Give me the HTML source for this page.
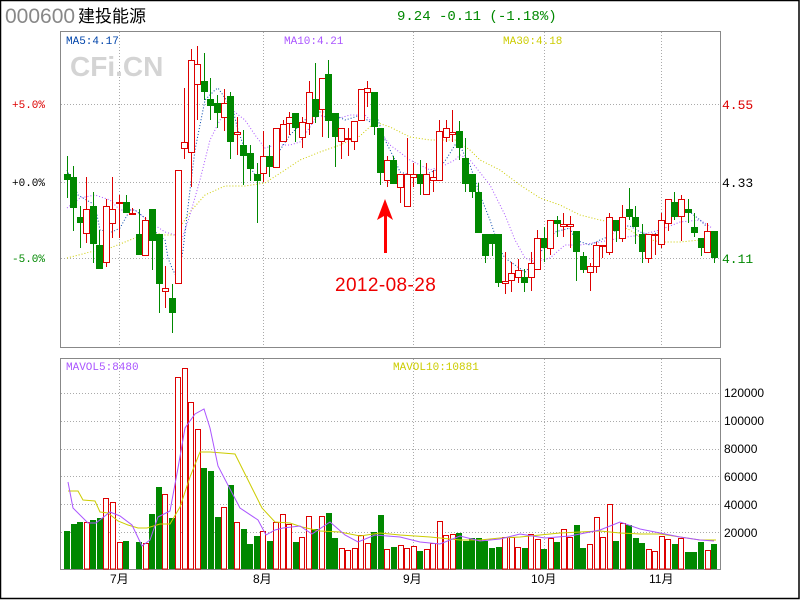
<!DOCTYPE html>
<html><head><meta charset="utf-8"><style>
html,body{margin:0;padding:0;background:#fff}
#w{position:relative;width:800px;height:600px;overflow:hidden;background:#fff}
svg{position:absolute;left:0;top:0}
.t{font-family:"Liberation Mono","DejaVu Sans Mono",monospace}
#c rect,#c line{shape-rendering:crispEdges}
</style></head><body><div id="w">
<svg id="s" width="800" height="600" xmlns="http://www.w3.org/2000/svg">
<rect x="0.5" y="0.5" width="798.5" height="598" fill="none" stroke="#000" stroke-width="1.5"/>
<text x="5" y="23" font-family="Liberation Sans,sans-serif" font-size="21" fill="#888">000600</text>
<text x="78" y="22" font-family="Liberation Sans,'Noto Sans CJK SC',sans-serif" font-size="17" fill="#000">建投能源</text>
<text x="397" y="20" class="t" font-size="14" fill="#080">9.24 -0.11 (-1.18%)</text>
<g stroke="#aaa" stroke-dasharray="1,2" stroke-width="1">
<line x1="61" y1="104.5" x2="720" y2="104.5"/><line x1="61" y1="182.5" x2="720" y2="182.5"/><line x1="61" y1="258.5" x2="720" y2="258.5"/>
<line x1="61" y1="393.5" x2="720" y2="393.5"/><line x1="61" y1="421.5" x2="720" y2="421.5"/><line x1="61" y1="449.5" x2="720" y2="449.5"/><line x1="61" y1="476.5" x2="720" y2="476.5"/><line x1="61" y1="504.5" x2="720" y2="504.5"/><line x1="61" y1="532.5" x2="720" y2="532.5"/>
<line x1="119.5" y1="32" x2="119.5" y2="347"/><line x1="263.5" y1="32" x2="263.5" y2="347"/><line x1="413.5" y1="32" x2="413.5" y2="347"/><line x1="544.5" y1="32" x2="544.5" y2="347"/><line x1="661.5" y1="32" x2="661.5" y2="347"/>
<line x1="119.5" y1="359" x2="119.5" y2="569"/><line x1="263.5" y1="359" x2="263.5" y2="569"/><line x1="413.5" y1="359" x2="413.5" y2="569"/><line x1="544.5" y1="359" x2="544.5" y2="569"/><line x1="661.5" y1="359" x2="661.5" y2="569"/>
</g>
<rect x="60.5" y="31.5" width="660" height="316" fill="none" stroke="#888"/>
<rect x="60.5" y="358.5" width="660" height="211" fill="none" stroke="#888"/>
<text x="70" y="76" font-family="Liberation Sans,sans-serif" font-weight="bold" font-size="28" fill="#d4d4d4">CFi.CN</text>
<g class="t" font-size="11">
<text x="66" y="44" fill="#04a">MA5:4.17</text>
<text x="284" y="44" fill="#a5f">MA10:4.21</text>
<text x="503" y="44" fill="#cc0">MA30:4.18</text>
<text x="12" y="108" fill="#d00">+5.0%</text>
<text x="12" y="186" fill="#000">+0.0%</text>
<text x="12" y="262" fill="#080">-5.0%</text>
<text x="722" y="109" fill="#d00" font-size="13">4.55</text>
<text x="722" y="187" fill="#000" font-size="13">4.33</text>
<text x="722" y="263" fill="#080" font-size="13">4.11</text>
<text x="66" y="370" fill="#a5f">MAVOL5:8480</text>
<text x="393" y="370" fill="#cc0">MAVOL10:10881</text>
</g>
<g font-family="Liberation Sans,sans-serif" font-size="12" fill="#000">
<text x="724" y="397">120000</text><text x="724" y="425">100000</text><text x="724" y="453">80000</text><text x="724" y="481">60000</text><text x="724" y="509">40000</text><text x="724" y="537">20000</text>
</g>
<g font-family="Liberation Sans,'Noto Sans CJK SC',sans-serif" font-size="12" fill="#000">
<text x="110" y="583">7月</text><text x="253" y="583">8月</text><text x="403" y="583">9月</text><text x="531" y="583">10月</text><text x="649" y="583">11月</text>
</g>
<g id="c"></g>
<polygon points="385,199 377,220 384,216 384,253 387,253 387,216 393,220" fill="#f00"/>
<text x="335" y="291" font-family="Liberation Sans,sans-serif" font-size="19" letter-spacing="0.4" fill="#e00">2012-08-28</text>
</svg>
</div>
<script>
var C=[[67,'g',174,180,156,198],[73,'g',177,208,166,231],[80,'g',217,223,206,248],[86,'r',209,233,177,243],[93,'g',206,244,192,263],[99,'g',245,269,230,269],[106,'r',206,262,199,267],[112,'r',209,223,177,238],[119,'r',202,203,195,238],[126,'g',202,213,195,213],[132,'r',213,214,208,214],[139,'g',234,255,209,255],[145,'r',220,255,217,255],[152,'g',209,241,209,270],[159,'g',234,284,234,313],[165,'r',288,291,266,308],[172,'g',298,313,284,333],[178,'r',170,283,170,283],[184,'r',142,148,88,159],[191,'r',60,152,49,187],[197,'r',64,84,46,120],[204,'g',81,92,53,100],[210,'g',99,106,78,120],[217,'g',103,113,95,128],[224,'r',103,117,89,131],[230,'g',96,142,92,159],[237,'r',132,134,117,155],[243,'g',145,156,130,185],[250,'g',153,169,145,181],[257,'g',174,181,163,223],[263,'r',156,173,131,182],[269,'g',156,167,145,177],[276,'r',128,167,128,167],[283,'r',124,141,120,141],[289,'r',117,123,112,135],[295,'g',113,128,113,142],[302,'r',122,137,117,148],[309,'r',92,123,81,135],[315,'g',99,117,63,123],[322,'r',78,109,78,137],[328,'g',74,121,60,138],[335,'g',113,137,113,167],[341,'r',128,141,128,159],[348,'r',138,139,128,156],[354,'r',121,141,121,150],[361,'r',89,120,89,120],[367,'r',88,92,81,107],[374,'g',92,127,92,135],[380,'g',128,173,128,185],[387,'r',160,180,156,187],[393,'g',160,184,156,184],[400,'r',174,187,174,203],[407,'r',174,206,138,206],[413,'r',174,177,163,187],[420,'g',174,184,160,195],[426,'r',174,194,163,194],[433,'r',177,180,170,192],[439,'r',131,180,120,180],[446,'r',128,137,120,142],[452,'r',132,134,110,142],[459,'g',131,148,121,160],[465,'g',158,184,138,192],[472,'g',174,192,174,198],[478,'g',192,233,183,233],[485,'g',234,256,234,263],[492,'g',234,244,234,256],[498,'g',234,283,234,287],[505,'r',281,283,252,294],[511,'r',273,280,262,292],[518,'r',270,277,259,283],[524,'g',277,283,269,292],[531,'r',263,277,252,291],[537,'r',238,269,230,269],[544,'g',238,248,227,262],[550,'r',220,248,220,255],[557,'g',220,224,216,237],[563,'r',224,226,213,237],[570,'r',224,226,216,248],[576,'g',231,252,231,281],[583,'g',256,270,252,273],[590,'r',266,272,263,291],[596,'r',245,266,242,273],[602,'r',245,246,245,258],[609,'r',217,252,213,255],[616,'g',220,231,220,242],[622,'r',217,238,205,242],[629,'g',209,217,188,220],[635,'g',217,227,206,244],[642,'g',234,252,224,263],[648,'r',234,258,234,263],[655,'r',234,235,234,255],[661,'r',220,244,213,248],[668,'r',199,223,199,231],[674,'g',202,217,192,220],[681,'r',199,216,195,241],[688,'g',209,213,199,223],[694,'g',227,233,213,237],[701,'g',238,248,238,256],[707,'r',231,252,223,252],[714,'g',231,258,231,263]];
var V=[[64,'g',531],[71,'g',524],[77,'g',522],[84,'r',522],[90,'g',520],[97,'g',518],[103,'r',498],[110,'r',502],[117,'r',542],[123,'g',541],[136,'g',542],[143,'r',543],[149,'g',514],[156,'g',487],[162,'r',494],[169,'g',518],[175,'r',377],[182,'r',368],[188,'r',402],[195,'r',429],[201,'g',468],[208,'g',471],[215,'g',517],[221,'r',507],[228,'g',485],[234,'r',522],[241,'g',529],[247,'g',544],[254,'g',536],[260,'r',531],[267,'g',541],[273,'r',522],[280,'r',514],[286,'r',524],[293,'g',542],[299,'r',537],[306,'r',516],[312,'g',529],[319,'r',516],[326,'g',513],[332,'g',538],[339,'r',548],[345,'r',550],[352,'r',548],[358,'r',535],[365,'r',543],[371,'g',532],[378,'g',515],[384,'r',549]];
var V2=[[3,'g',547],[24,'r',545],[43,'r',548],[63,'r',546],[81,'g',551],[102,'r',549],[121,'r',543],[142,'r',521],[160,'r',535],[180,'r',534],[199,'g',533],[219,'g',541],[238,'g',538],[258,'g',538],[277,'g',541],[297,'g',548],[317,'g',547],[337,'r',537],[356,'r',537],[376,'r',547],[395,'g',548],[415,'r',534],[435,'r',539],[453,'g',549],[474,'r',538],[492,'g',542],[513,'r',529],[532,'r',537],[551,'g',525],[570,'g',548],[590,'r',544],[612,'r',517],[631,'r',537],[651,'r',504],[668,'g',541],[690,'r',523],[708,'g',525],[728,'g',538],[747,'g',543],[767,'r',549],[786,'r',551],[806,'r',536],[825,'r',539],[845,'g',544],[864,'r',538],[884,'g',552],[904,'g',552],[923,'g',542],[945,'r',550],[963,'g',544]];
V2.forEach(function(b){V.push([390+b[0]/3,b[1],b[2]])});
var s='';
function ln(p,c,d){return '<polyline fill="none" stroke="'+c+'" stroke-width="1"'+(d?' stroke-dasharray="1,2"':'')+' points="'+p+'"/>';}
s+=ln('67,258 90,252 110,248 130,240 150,232 165,235 175,235 190,212 205,195 225,186 245,186 265,183 285,170 300,160 320,152 340,145 360,136 375,122 390,127 410,137 430,140 455,140 470,150 480,160 500,170 520,185 540,198 560,205 580,215 600,220 610,222 630,230 640,237 660,242 680,242 700,240 710,236','#cc0',1);
s+=ln('67,208 80,198 95,195 110,200 120,210 135,210 150,222 165,232 175,235 180,245 190,215 200,180 210,140 220,120 232,110 245,120 255,135 265,148 275,145 290,145 300,142 318,115 330,118 340,118 350,115 365,115 375,125 390,145 410,160 430,170 445,165 455,160 460,155 470,160 490,185 505,215 515,240 525,258 535,262 550,258 565,245 580,245 600,242 620,238 640,235 660,230 680,222 700,220 712,228','#a5f',1);
s+=ln('67,170 78,195 95,205 100,230 112,232 120,228 130,210 135,210 145,218 158,235 165,240 168,258 172,268 178,280 183,250 190,190 195,150 205,100 215,90 218,88 225,98 233,110 238,130 245,150 252,170 258,180 262,172 270,162 280,150 290,135 300,125 313,112 325,112 335,115 345,120 352,118 360,115 370,122 378,120 385,140 395,160 400,172 410,175 425,175 440,168 447,158 455,145 462,150 470,165 480,195 490,220 500,250 505,258 515,265 525,272 535,262 545,245 555,232 570,228 575,240 590,245 600,240 610,236 620,226 630,226 640,232 650,235 660,232 670,215 680,210 690,212 700,220 706,226','#04a',1);
C.forEach(function(k){var x=k[0],col=k[1]=='r'?'#d00':'#080',h=Math.max(1,k[3]-k[2]);
s+='<rect x="'+x+'" y="'+k[4]+'" width="1" height="'+(k[5]-k[4])+'" fill="'+col+'"/>';
if(k[1]=='r')s+='<rect x="'+(x-2.5)+'" y="'+(k[2]+0.5)+'" width="6" height="'+h+'" fill="#fff" stroke="#d00"/>';
else s+='<rect x="'+(x-3)+'" y="'+k[2]+'" width="7" height="'+h+'" fill="#080"/>';});
V.forEach(function(b){var x=Math.round(b[0]);
if(b[1]=='r')s+='<rect x="'+(x+0.5)+'" y="'+(b[2]+0.5)+'" width="5" height="'+(569-b[2]-0.5)+'" fill="#fff" stroke="#d00"/>';
else s+='<rect x="'+x+'" y="'+b[2]+'" width="6" height="'+(569-b[2])+'" fill="#080"/>';});
s+=ln('68,491 78,491 83,500 95,501 100,512 108,513 118,521 128,525 138,528 147,528 160,524 170,524 180,507 190,477 200,452 210,452 235,454 248,480 262,508 275,522 290,523 302,527 320,531 340,532 360,536 380,533 400,535 430,537 460,540 480,540 500,538 520,537 540,535 560,533 580,532 600,531 620,533 640,534 660,534 680,537 700,540 716,540','#cc0');
s+=ln('68,482 73,508 88,523 96,523 110,512 120,516 132,525 142,546 150,540 158,517 170,511 178,468 185,428 195,414 204,409 210,428 218,466 230,489 240,508 258,520 266,535 275,530 283,528 300,526 312,534 330,522 345,535 358,542 375,535 400,537 420,542 440,544 460,536 480,541 500,539 520,534 545,538 570,536 600,530 620,522 640,529 660,533 680,537 700,540 714,541','#a5f');
document.getElementById('c').innerHTML=s;
</script>
</body></html>
